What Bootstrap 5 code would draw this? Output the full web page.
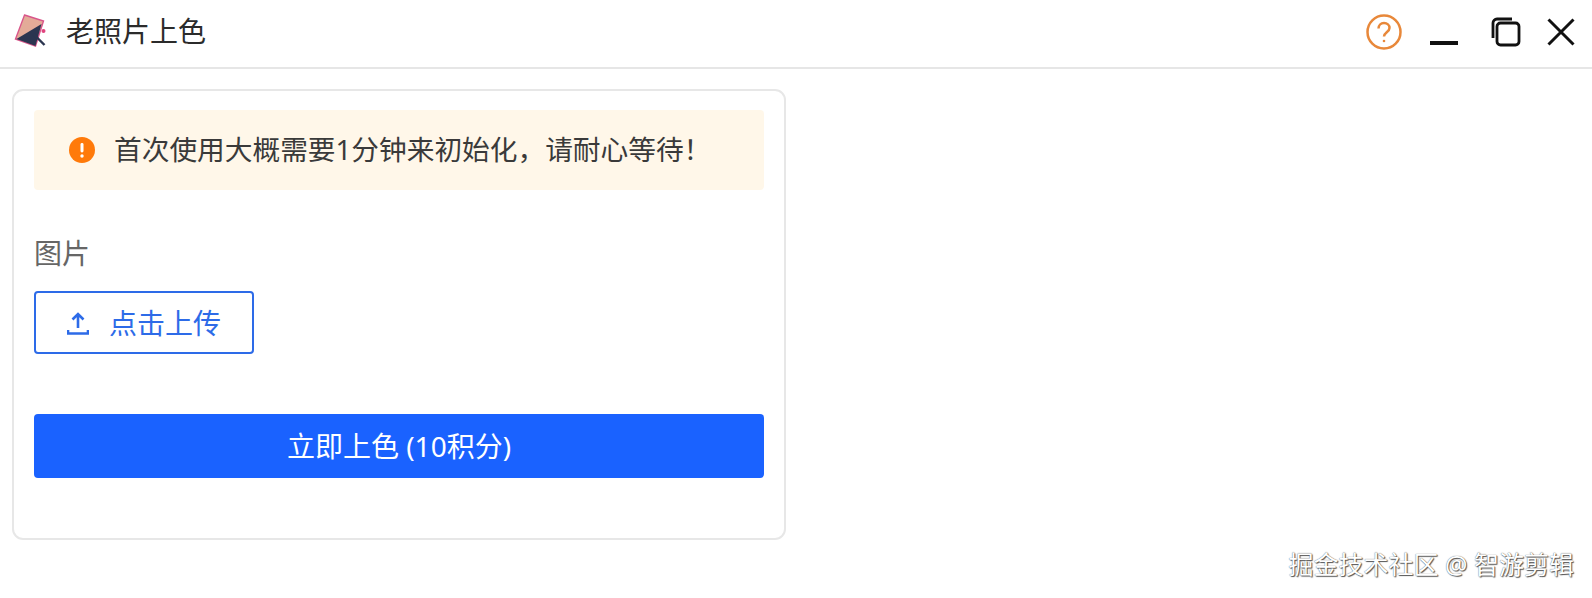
<!DOCTYPE html>
<html lang="zh-CN">

<head>
    <meta charset="UTF-8">
    <meta name="viewport" content="width=device-width, initial-scale=1.0">
    <title>老照片上色</title>
    <link rel="stylesheet" href="https://cdn.jsdelivr.net/npm/bootstrap@5.3.0/dist/css/bootstrap.min.css">
    <style>
        body {
            height: 598px;
            overflow: hidden;
            background: #fff;
            font-family: "Noto Sans", "Noto Sans CJK SC", sans-serif;
            font-size: 28px;
            color: #2b2b2b;
        }

        .title-bar {
            height: 69px;
            padding: 0 17px 4px 14px;
            border-bottom: 2px solid #e6e6e6;
        }

        .app-title {
            margin-left: 17px;
            margin-bottom: 2px;
            line-height: 1;
        }

        .win-min {
            margin-left: 28px;
        }

        .win-restore {
            margin-left: 33px;
        }

        .win-close {
            margin-left: 26px;
        }

        .main-panel {
            width: 774px;
            height: 451px;
            margin: 20px 0 0 12px;
            padding: 19px 20px;
            border: 2px solid #e7e7e7;
            border-radius: 11px;
        }

        .notice {
            height: 80px;
            padding-left: 35px;
            gap: 19px;
            font-size: 27.7px;
            background: #fff7e9;
            border-radius: 4px;
            color: #3a3a3a;
        }

        .field-label {
            margin-top: 44px;
            height: 38px;
            line-height: 38px;
            color: #666;
        }

        .upload-btn {
            width: 220px;
            height: 63px;
            margin-top: 19px;
            padding: 0;
            gap: 20px;
            font-size: 28px;
            color: #2d6be8;
            border: 2px solid #2d6be8;
            border-radius: 4px;
            background: #fff;
        }

        .go-btn {
            height: 64px;
            margin-top: 60px;
            padding: 0;
            font-size: 28px;
            color: #fff;
            background: #1a62ff;
            border: 0;
            border-radius: 4px;
        }

        .watermark {
            position: absolute;
            right: 18px;
            bottom: 19px;
            font-size: 25px;
            line-height: 1.2;
            color: #fff;
            text-shadow: 0 0 1px #444, 1px 1px 1px #555;
        }
    </style>
</head>

<body class="position-relative">
    <div class="title-bar d-flex align-items-center">
        <svg width="35" height="36" viewBox="0 0 34 36">
            <polygon points="10,1 29,7 21,32 1,25" fill="#e3ab98" stroke="#d9558a" stroke-width="1.4" />
            <polygon points="2,25 27,10 21,32" fill="#2b3550" />
            <path d="M19 20 L30 31" stroke="#2b3550" stroke-width="2.4" />
            <circle cx="29" cy="17" r="2" fill="#e0447e" />
        </svg>
        <span class="app-title">老照片上色</span>
        <div class="d-flex align-items-center ms-auto">
            <svg width="36" height="36" viewBox="0 0 36 36" fill="none" stroke="#e8883a" stroke-width="2.5">
                <circle cx="18" cy="18" r="16.5" />
                <path d="M12.5 14.5c0-3.2 2.4-5.5 5.5-5.5s5.5 2.2 5.5 5c0 4-5.5 4.6-5.5 8.5" />
                <circle cx="18" cy="27" r="1.3" fill="#e8883a" stroke="none" />
            </svg>
            <svg class="win-min" width="28" height="36" viewBox="0 0 28 36" fill="none" stroke="#111" stroke-width="4">
                <path d="M0 29H28" />
            </svg>
            <svg class="win-restore" width="30" height="30" viewBox="0 0 30 30" fill="none" stroke="#111" stroke-width="2.8">
                <rect x="6" y="6" width="22" height="22" rx="3.5" />
                <path d="M2 21V6a4 4 0 0 1 4-4h15" />
            </svg>
            <svg class="win-close" width="28" height="28" viewBox="0 0 28 28" fill="none" stroke="#111" stroke-width="3">
                <path d="M1.5 1.5L26.5 26.5M26.5 1.5L1.5 26.5" />
            </svg>
        </div>
    </div>

    <div class="main-panel">
        <div class="notice d-flex align-items-center">
            <svg width="26" height="26" viewBox="0 0 26 26">
                <circle cx="13" cy="13" r="13" fill="#ff7a0a" />
                <rect x="11.5" y="6" width="3" height="9.5" rx="1.4" fill="#fff" />
                <circle cx="13" cy="19" r="1.7" fill="#fff" />
            </svg>
            <span>首次使用大概需要1分钟来初始化&#65292;请耐心等待&#65281;</span>
        </div>
        <div class="field-label">图片</div>
        <button type="button" class="btn upload-btn d-flex align-items-center justify-content-center">
            <svg width="22" height="24" viewBox="0 0 22 24" fill="none" stroke="#2d6be8" stroke-width="2.6">
                <path d="M11 17V3M5.500 8.500L11 3l5.500 5.500M1 19v3.500h20V19" />
            </svg>
            <span>点击上传</span>
        </button>
        <button type="button" class="btn go-btn w-100 d-block">立即上色 (10积分)</button>
    </div>

    <div class="watermark">掘金技术社区 @ 智游剪辑</div>

    <script src="https://cdn.jsdelivr.net/npm/bootstrap@5.3.0/dist/js/bootstrap.bundle.min.js"></script>
</body>

</html>
